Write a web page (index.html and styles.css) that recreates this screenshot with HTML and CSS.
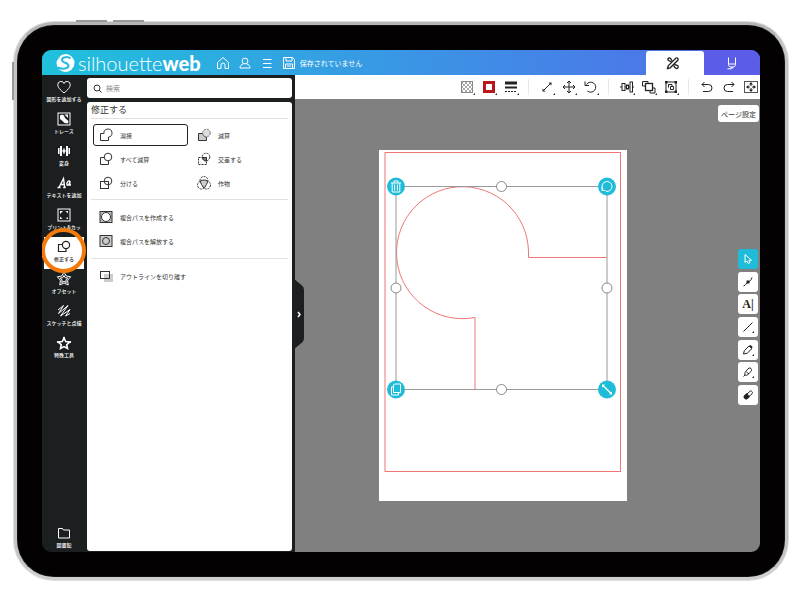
FILE: index.html
```html
<!DOCTYPE html>
<html lang="ja">
<head>
  <meta charset="UTF-8">
  <meta name="viewport" content="width=device-width, initial-scale=1">
  <title>Silhouette Web</title>
  <link rel="stylesheet" href="styles.css">
</head>
<body>
  <div class="tablet">
    <span class="key key-up"></span>
    <span class="key key-down"></span>
    <span class="key key-side"></span>

    <div class="screen">
      <header class="header">
        <a class="logo" href="#">
          <svg width="20" height="20" viewBox="0 0 20 20"><circle cx="10.500" cy="10" r="9" fill="#fff" stroke="none"/><path d="M15.500 5.500C13 3.500 7.500 3.500 7 6.800c-.3 3.200 6.500 2.700 6.500 6 0 3-6 3.700-10.500 1.700" fill="none" stroke="#25bbdf" stroke-width="2"/><path d="M1 8c1.500-1 2-3 4-4.500" fill="none" stroke="#25bbdf" stroke-width="1"/></svg>
          <span class="logo-text">silhouette<b>web</b></span>
        </a>
        <nav class="menu">
          <button aria-label="ホーム"><svg width="14" height="14" viewBox="0 0 14 14"><path d="M1.500 6.500 7 1.500l5.500 5V12.500H9V9a2 2 0 0 0-4 0v3.500H1.500z"/></svg></button>
          <button aria-label="アカウント"><svg width="14" height="14" viewBox="0 0 14 14"><circle cx="7" cy="5" r="2.900"/><path d="M5.500 7.800C3 8.500 2 10 2 12h10c0-2-1-3.500-3.500-4.200"/></svg></button>
          <button aria-label="メニュー"><svg width="14" height="14" viewBox="0 0 14 14"><path d="M3 3.500h8.500M3 7.500h8.500M3 11.500h8.500"/></svg></button>
          <button class="save"><svg width="14" height="14" viewBox="0 0 14 14"><path d="M1.500 1.500h9l2 2v9h-11zM4 1.500v3.500h6V1.500M3.500 12.500V8h7v4.500M5 10h4"/></svg>保存されていません</button>
        </nav>
        <div class="tabs">
          <button class="tab tab-design" aria-label="デザイン"><svg width="14" height="14" viewBox="0 0 14 14"><g stroke-width="1.300"><path d="M1.500 12.500 2.200 9.800 10 2a1.500 1.500 0 0 1 2 2L4.200 11.800z"/><path d="M5.500 5.800 2.500 4.500C.8 3 3 .8 4.500 2.500L6.200 5M8.200 8.500l3 .8c2 1 1 3.400-.7 3.200-1.500 0-2-1.500-3-3"/></g></svg></button>
          <button class="tab tab-send" aria-label="送信"><svg width="14" height="14" viewBox="0 0 14 14"><path d="M3.500 1.500v7c0 1.500 1 2.500 2.500 2.500h2c1.500 0 2.500-1 2.500-2.500v-7M3.500 8h7M6 11l1 1.500L8 11M2.500 12.800h4"/></svg></button>
        </div>
      </header>

      <div class="workspace">
        <nav class="sidebar">
          <button class="tool"><svg width="16" height="16" viewBox="0 0 16 16"><path d="M8 14C4 10.500 1.800 8.600 1.800 5.800A3.200 3.200 0 0 1 8 4.500a3.200 3.200 0 0 1 6.200 1.300C14.200 8.600 12 10.500 8 14z"/></svg><span>図形を追加する</span></button>
          <button class="tool"><svg width="16" height="16" viewBox="0 0 16 16"><rect x="2" y="2" width="12" height="12"/><path class="solid" d="M4 4.500 6 3.500l2 1 1 2.500 3.500 3-.5 2.500-3.500-.5-2-2L4 8zM8.500 3.500 12 7V3.500z"/></svg><span>トレース</span></button>
          <button class="tool"><svg width="16" height="16" viewBox="0 0 16 16"><path class="solid" d="M2 5h1.500v6H2zM4 3h2v10H4zM10 3h2v10h-2zM12.500 5H14v6h-1.500zM7.200 5.500h1.600v5H7.200zM5 7.400h6v1.200H5z"/></svg><span>変身</span></button>
          <button class="tool"><svg width="16" height="16" viewBox="0 0 16 16"><path d="M1.500 12.500h3M3 12.500 7.500 3.500l1.200 9M7.200 12.500h2.500M4.300 9.500h4" stroke-width="1.400"/><path d="M14 6c-3-1-4 4-2.500 4.300C13 10.300 14 6 14 6l-.3 4h1.300" stroke-width="1.300"/></svg><span>テキストを追加</span></button>
          <button class="tool"><svg width="16" height="16" viewBox="0 0 16 16"><rect x="2" y="2" width="12" height="12"/><path class="solid" d="M4 4h3L4 7zM12 4v2.500L9.500 4zM4 12V9.500L6.500 12zM10.500 10.500H12V12h-1.500z"/></svg><span>プリント&amp;カッ</span></button>
          <button class="tool active"><svg width="16" height="16" viewBox="0 0 16 16"><path d="M6 5.500H2.500v7h7.500V9.500" stroke-width="1.200"/><circle cx="10" cy="6" r="3.600" stroke-width="1.200"/></svg><span>修正する</span></button>
          <button class="tool"><svg width="16" height="16" viewBox="0 0 16 16"><path d="m8 1 2.200 4 4.500.8-3.100 3.400.6 4.800L8 12l-4.200 2 .6-4.800L1.300 5.800l4.500-.8z"/><path d="m8 4.500 1.200 2.200 2.600.3-1.900 2 .4 2.600L8 10.300l-2.300 1.300.4-2.600-1.900-2 2.600-.3z"/></svg><span>オフセット</span></button>
          <button class="tool"><svg width="16" height="16" viewBox="0 0 16 16"><path d="M2 7 7.500 2.500 2.500 10.500 12 2.500 4.500 13 14 6.500 9.500 13l4.500-2.500" stroke-linejoin="round"/></svg><span>スケッチと点描</span></button>
          <button class="tool"><svg width="16" height="16" viewBox="0 0 16 16"><path d="m8 3 1.700 3.500 4 .5-3 2.700.8 3.800L8 11.600l-3.500 1.900.8-3.800-3-2.700 4-.5z" stroke-width="1.600"/><path class="solid" d="M7 2h2v2.500H7zM1 6.500h3v1.400H1zM12 6.500h3v1.400h-3z"/></svg><span>特殊工具</span></button>
          <button class="tool library"><svg width="16" height="16" viewBox="0 0 16 16"><path d="M2.500 3.500h4l1 1.500h6v8h-11z"/></svg><span>図書館</span></button>
        </nav>

        <div class="panels">
          <label class="search">
            <svg width="9" height="9" viewBox="0 0 9 9"><circle cx="4" cy="4" r="3"/><path d="m6.200 6.200 2.300 2.300"/></svg>
            <input type="search" placeholder="検索" aria-label="検索">
          </label>
          <section class="panel">
            <h2>修正する</h2>
            <div class="options">
              <button class="option selected"><svg width="14" height="14" viewBox="0 0 14 14"><path d="M5 5.500H1.500v7h8V9A4 4 0 1 0 5 5.500z"/></svg>溶接</button>
              <button class="option"><svg width="14" height="14" viewBox="0 0 14 14"><path d="M6 5.500H1.500v7h8V9C7 9 6 7.500 6 5.500z" fill="#ccc"/><circle class="dashed" cx="9.500" cy="5" r="3.800" stroke="#777" fill="#ddd"/></svg>減算</button>
              <button class="option"><svg width="14" height="14" viewBox="0 0 14 14"><path d="M5.500 5.500h-4v7h8V9"/><circle cx="9" cy="5" r="3.800"/></svg>すべて減算</button>
              <button class="option"><svg width="14" height="14" viewBox="0 0 14 14"><rect class="dashed" x="1.500" y="5.500" width="8" height="7"/><circle class="dashed" cx="9" cy="5" r="3.800"/><path d="M5.500 5.500h4V9c-2.500 0-4-1.500-4-3.500z" fill="#777"/></svg>交差する</button>
              <button class="option"><svg width="14" height="14" viewBox="0 0 14 14"><rect x="1.500" y="5.500" width="8" height="7"/><circle cx="9" cy="5" r="3.800"/></svg>分ける</button>
              <button class="option"><svg width="14" height="14" viewBox="0 0 14 14"><circle class="dashed" cx="7" cy="4.500" r="4"/><circle class="dashed" cx="4.500" cy="9" r="4"/><circle class="dashed" cx="9.500" cy="9" r="4"/><path d="M3.500 4.800c2-1 5-1 7 0C10.500 7.500 9 9.500 7 12 5 9.500 3.500 7.500 3.500 4.800z" fill="#ccc"/></svg>作物</button>
            </div>
            <div class="options single">
              <button class="option"><svg width="14" height="14" viewBox="0 0 14 14"><rect x="1" y="1.500" width="12" height="11" fill="#bbb"/><circle cx="7" cy="7" r="4.500" fill="#fff"/></svg>複合パスを作成する</button>
              <button class="option"><svg width="14" height="14" viewBox="0 0 14 14"><rect x="1" y="1.500" width="12" height="11" fill="#ccc"/><circle cx="7" cy="7" r="3.500" fill="#ccc"/></svg>複合パスを解放する</button>
            </div>
            <div class="options single">
              <button class="option"><svg width="14" height="14" viewBox="0 0 14 14"><path d="M5 5h9v8H5z" fill="#ccc" stroke="none"/><rect x="1.500" y="2.500" width="9" height="7"/></svg>アウトラインを切り離す</button>
            </div>
          </section>
        </div>

        <main class="editor">
          <div class="toolbar">
            <div class="group">
              <button class="more" aria-label="塗りつぶし"><svg width="16" height="16" viewBox="0 0 16 16"><path d="M2 4h12M2 8h12M2 12h12" stroke="#aaa" stroke-width="2" stroke-dasharray="2 2"/><path d="M4 6h10M4 10h10" stroke="#aaa" stroke-width="2" stroke-dasharray="2 2"/><rect x="2.500" y="2.500" width="11" height="11" stroke="#888"/></svg></button>
              <button class="more" aria-label="線の色"><svg width="16" height="16" viewBox="0 0 16 16"><rect x="3.500" y="3.500" width="9" height="9" stroke="#b9161c" stroke-width="3"/></svg></button>
              <button class="more" aria-label="線のスタイル"><svg width="16" height="16" viewBox="0 0 16 16"><path d="M2 4h12" stroke-width="3"/><path d="M2 8.500h12" stroke-width="2"/><path d="M2 12.500h12" stroke-dasharray="2 1"/></svg></button>
            </div>
            <div class="group">
              <button class="more" aria-label="サイズ"><svg width="16" height="16" viewBox="0 0 16 16"><path d="m4 12 8-8"/><path class="solid" d="M12.500 3.500v3l-3-3zM3.500 12.500v-3l3 3z"/></svg></button>
              <button class="more" aria-label="移動"><svg width="16" height="16" viewBox="0 0 16 16"><path d="M8 2v12M2 8h12M6 4l2-2 2 2M6 12l2 2 2-2M4 6 2 8l2 2M12 6l2 2-2 2"/></svg></button>
              <button class="more" aria-label="回転"><svg width="16" height="16" viewBox="0 0 16 16"><path d="M3.500 5.500A5 5 0 1 1 4.500 12M2 2.500v4h4"/></svg></button>
            </div>
            <div class="group">
              <button class="more" aria-label="整列"><svg width="16" height="16" viewBox="0 0 16 16"><path d="M1 8h2M13 8h2M6 8h1.500M9.500 8H11"/><rect x="3" y="4.500" width="3" height="7"/><rect x="7.500" y="6" width="2" height="4"/><rect x="11" y="3" width="2.500" height="10"/></svg></button>
              <button class="more" aria-label="重ね順"><svg width="16" height="16" viewBox="0 0 16 16"><rect x="4.500" y="4.500" width="7" height="7" stroke-width="1.300"/><path d="M4.500 7H1.500V2.500H7v2M9 11.500v2.500h5V9h-2.500"/></svg></button>
              <button class="more" aria-label="グループ"><svg width="16" height="16" viewBox="0 0 16 16"><rect x="3" y="3" width="10" height="10"/><path d="M5.500 8.500v-3H9V7M7.500 7.500h3v3h-3z"/><path class="solid" d="M2 2h2.500v2.500H2zM11.500 2H14v2.500h-2.500zM2 11.500h2.500V14H2zM11.500 11.500H14V14h-2.500z"/></svg></button>
            </div>
            <div class="group">
              <button aria-label="元に戻す"><svg width="16" height="16" viewBox="0 0 16 16"><path d="M5.500 3 3 5.500 5.500 8M3 5.500h6.500a3.500 3.500 0 0 1 0 7H4"/></svg></button>
              <button aria-label="やり直し"><svg width="16" height="16" viewBox="0 0 16 16"><path d="M10.500 3 13 5.500 10.500 8M13 5.500H6.500a3.500 3.500 0 0 0 0 7H12"/></svg></button>
              <button aria-label="全体表示"><svg width="16" height="16" viewBox="0 0 16 16"><rect x="1.500" y="2.500" width="13" height="11" stroke="#555"/><path d="M8 4v3M8 9v3M4 8h3M9 8h3" stroke-width="1"/><path class="solid" d="m8 3 2 2.500H6zM8 13l2-2.500H6zM3 8l2.500-2v4zM13 8l-2.500-2v4z"/></svg></button>
            </div>
          </div>

          <div class="canvas">
            <button class="collapse" aria-label="パネルを閉じる"><svg width="11" height="72" viewBox="0 0 11 72"><path d="M0 0 9 7.500Q11 9 11 12v48q0 3-2 4.500L0 72z" fill="#1c1f20"/><path d="m5 34 2 2.500L5 39" fill="none" stroke="#fff" stroke-width="1.500"/></svg></button>

            <svg class="paper" width="248" height="351" viewBox="0 0 248 351">
              <rect width="248" height="351" fill="#fff"/>
              <rect x="6" y="2.500" width="235.500" height="319" class="cut-line"/>
              <path d="M228 107.500H149.500V102A66 66 0 1 0 96 167.500V239" class="cut-line"/>
              <rect x="17" y="36.500" width="211" height="203" class="bounds"/>
              <g class="knob">
                <circle cx="122.500" cy="36.500" r="5"/>
                <circle cx="17" cy="138" r="5"/>
                <circle cx="228" cy="138" r="5"/>
                <circle cx="122.500" cy="239.500" r="5"/>
              </g>
              <g class="corner" transform="translate(17 36.500)"><circle r="9"/><path d="M-5-3.500H5M-2-4v-1.500h4V-4M-3.800-3.500v9h7.600v-9M-1.400-2v6M1.400-2v6"/></g>
              <g class="corner" transform="translate(228 36.500)"><circle r="9"/><path d="M-4 3A5 5 0 1 1-1 4.900M-5 .5v3.500h3.500"/></g>
              <g class="corner" transform="translate(17 239.500)"><circle r="9"/><path d="M-1.500-5.500h6v8.500h-7v-7.500zM-2.500-2.500h-2V5.500h7V3"/></g>
              <g class="corner" transform="translate(228 239.500)"><circle r="9"/><path d="m-4-4 8 8" stroke-width="1.300"/><path d="M-5-5h3l-3 3zM5 5H2l3-3z" fill="#fff" stroke="none"/></g>
            </svg>

            <button class="page-setup">ページ設定</button>

            <div class="draw-tools">
              <button class="on" aria-label="選択"><svg width="14" height="14" viewBox="0 0 14 14"><path d="M4 2.500v8l2-1.500 1.200 2.500 1.800-1L8 8.200h2.500z"/></svg></button>
              <button aria-label="ポイント編集"><svg width="14" height="14" viewBox="0 0 14 14"><path d="M2.500 11C5 10.500 5 8 7 7s3-1.500 4-4.500"/><path class="solid" d="M5.500 5.500h3v3h-3z"/></svg></button>
              <button class="text" aria-label="テキスト">A|</button>
              <button class="more" aria-label="線"><svg width="14" height="14" viewBox="0 0 14 14"><path d="m2.500 11.500 9-9"/></svg></button>
              <button class="more" aria-label="鉛筆"><svg width="14" height="14" viewBox="0 0 14 14"><path d="m2.500 11 .8-3.300L8 3l3 2.500-4.700 4.700z"/><path class="solid" d="m8 3 1.500-1 2 1.800L11 5.500z"/></svg></button>
              <button class="more" aria-label="ブラシ"><svg width="14" height="14" viewBox="0 0 14 14"><path d="M2.500 11.500 4 10C3 8 5 6 8 3c1.500-.5 3 1 2.500 2.500C8 9 6 11 4 10M5.500 7l2.500 2"/></svg></button>
              <button aria-label="消しゴム"><svg width="14" height="14" viewBox="0 0 14 14"><path d="M6 6 9 3.300c.8-.6 1.500-.3 2 .3.600.8.700 1.500 0 2.200L8 8.500"/><path class="solid" d="M3 7.500 5.800 5l3.200 3.800-2.800 2.400c-1 .7-2 .4-2.900-.6-.9-1.100-1-2.300-.3-3.100z"/></svg></button>
            </div>
          </div>
        </main>
      </div>
    </div>
  </div>
</body>
</html>
```

FILE: styles.css
```css
*,
*::after {
  box-sizing: border-box;
}

body {
  margin: 0;
  padding: 22px 12px 20px 14px;
  min-height: 100vh;
  display: flex;
  background: #fff;
  font-family: "Noto Sans CJK JP", sans-serif;
  color: #333;
}

button {
  border: 0;
  padding: 0;
  background: none;
  font-family: inherit;
  color: inherit;
  cursor: pointer;
}

svg {
  display: block;
  flex: none;
  fill: none;
  stroke: currentColor;
}

.solid {
  fill: currentColor;
  stroke: none;
}

/* tablet frame */
.tablet {
  position: relative;
  flex: 1;
  display: flex;
  padding: 25px;
  background: #030102;
  border: 3px solid #c4c4c4;
  border-color: #b5b5b5 #c4c4c4 #cfcfcf;
  border-radius: 40px;
  box-shadow: inset 0 0 0 1px #111, 0 0 0 1px #ddd;
}

.key {
  position: absolute;
  background: #999;
}

.key-up,
.key-down {
  top: -5px;
  width: 31px;
  height: 2px;
}

.key-up {
  left: 59px;
}

.key-down {
  left: 96px;
}

.key-side {
  left: -5px;
  top: 37px;
  width: 2px;
  height: 38px;
}

.screen {
  flex: 1;
  min-width: 0;
  display: flex;
  flex-direction: column;
  border-radius: 9px;
  overflow: hidden;
  background: #1c1f20;
}

/* header */
.header {
  display: flex;
  height: 25px;
  color: #fff;
  background: linear-gradient(90deg, #1fc1dc, #3a96e5 50%, #4b78e8 85%, #5b5de8);
}

.logo {
  display: flex;
  align-items: center;
  gap: 3px;
  padding-left: 13px;
  color: #fff;
  text-decoration: none;
}

.logo-text {
  font: 300 20px/24px Lato, sans-serif;
}

.logo-text b {
  font-weight: 900;
}

.menu {
  display: flex;
  align-items: center;
  gap: 8px;
  padding-left: 15px;
}

.save {
  display: flex;
  align-items: center;
  gap: 4px;
  font-size: 7px;
}

.tabs {
  display: flex;
  margin-left: auto;
}

.tab {
  width: 56px;
  display: flex;
  align-items: center;
  justify-content: center;
}

.tab-design {
  width: 58px;
  margin-top: 1px;
  padding-right: 4px;
  background: #fff;
  color: #222;
  border-radius: 3px 3px 0 0;
}

.tab-send {
  background: #5b5de8;
}

/* left column */
.workspace {
  flex: 1;
  display: flex;
}

.sidebar {
  width: 45px;
  display: flex;
  flex-direction: column;
  padding: 2px 3px 1px 2px;
}

.tool {
  position: relative;
  height: 32px;
  padding-top: 2px;
  display: flex;
  flex-direction: column;
  align-items: center;
  color: #fff;
  font-size: 5px;
  line-height: 8px;
  font-weight: 500;
}

.tool span {
  white-space: nowrap;
}

.tool.active {
  background: #fff;
  color: #222;
}

/* highlight ring round the current tool */
.tool.active::after {
  content: "";
  position: absolute;
  z-index: 1;
  left: 50%;
  top: 50%;
  width: 45px;
  height: 45px;
  margin: -25px 0 0 -23px;
  border: 4px solid #f47b0b;
  border-radius: 50%;
}

.tool.library {
  margin-top: auto;
  height: 28px;
}

.panels {
  width: 208px;
  display: flex;
  flex-direction: column;
  gap: 4px;
  padding: 3px 3px 1px 0;
}

.search {
  display: flex;
  align-items: center;
  gap: 2px;
  height: 20px;
  padding: 0 6px;
  background: #fff;
  border-radius: 3px;
}

.search input {
  flex: 1;
  min-width: 0;
  border: 0;
  outline: 0;
  background: none;
  font: 7px "Noto Sans CJK JP", sans-serif;
}

.search input::placeholder {
  color: #888;
}

.panel {
  flex: 1;
  background: #fff;
  border-radius: 3px;
  padding: 0 4px;
}

.panel h2 {
  margin: 0;
  font-size: 9px;
  line-height: 16px;
  font-weight: 400;
  border-bottom: 1px solid #e2e2e2;
}

.options {
  display: grid;
  grid-template-columns: 95px 95px;
  gap: 2px 3px;
  padding: 5px 2px;
}

.options.single {
  grid-template-columns: 1fr;
  border-top: 1px solid #e2e2e2;
  padding: 6px 2px;
}

.option {
  display: flex;
  align-items: center;
  gap: 7px;
  height: 22px;
  padding: 0 5px;
  border: 1px solid transparent;
  border-radius: 3px;
  font-size: 6px;
}

.option.selected {
  border-color: #222;
}

.dashed {
  stroke-dasharray: 2 1;
}

/* editor */
.editor {
  flex: 1;
  display: flex;
  flex-direction: column;
}

.toolbar {
  display: flex;
  justify-content: flex-end;
  align-items: center;
  height: 24px;
  padding-right: 1px;
  background: #fff;
  color: #222;
}

.group {
  display: flex;
  gap: 6px;
}

.group + .group {
  margin-left: 9px;
  padding-left: 10px;
  border-left: 1px solid #e8e8e8;
}

.more {
  position: relative;
}

.more::after {
  content: "";
  position: absolute;
  right: 0;
  bottom: 0;
  border: 1px solid #222;
  border-top-color: transparent;
  border-left-color: transparent;
}

.canvas {
  position: relative;
  flex: 1;
  background: #808080;
}

.collapse {
  position: absolute;
  left: -2px;
  top: 179px;
}

.collapse svg {
  stroke: none;
}

.paper {
  position: absolute;
  left: 84px;
  top: 51px;
  stroke: none;
}

.cut-line {
  stroke: #ee7777;
}

.bounds {
  stroke: #999;
}

.knob {
  fill: #fff;
  stroke: #888;
}

.corner {
  stroke: #fff;
}

.corner circle {
  fill: #1fbcd9;
  stroke: none;
}

.page-setup {
  position: absolute;
  right: 1px;
  top: 6px;
  width: 41px;
  height: 17px;
  background: #fff;
  border-radius: 3px;
  font-size: 7px;
}

.draw-tools {
  position: absolute;
  right: 2px;
  top: 150px;
  height: 156px;
  display: flex;
  flex-direction: column;
  justify-content: space-between;
}

.draw-tools button {
  width: 20px;
  height: 20px;
  display: flex;
  align-items: center;
  justify-content: center;
  background: #fff;
  border-radius: 3px;
  color: #222;
}

.draw-tools .more::after {
  right: 4px;
  bottom: 4px;
}

.draw-tools .on {
  background: #1fbcd9;
  color: #fff;
}

.draw-tools .text {
  font: bold 12px "Liberation Serif", serif;
}
```
